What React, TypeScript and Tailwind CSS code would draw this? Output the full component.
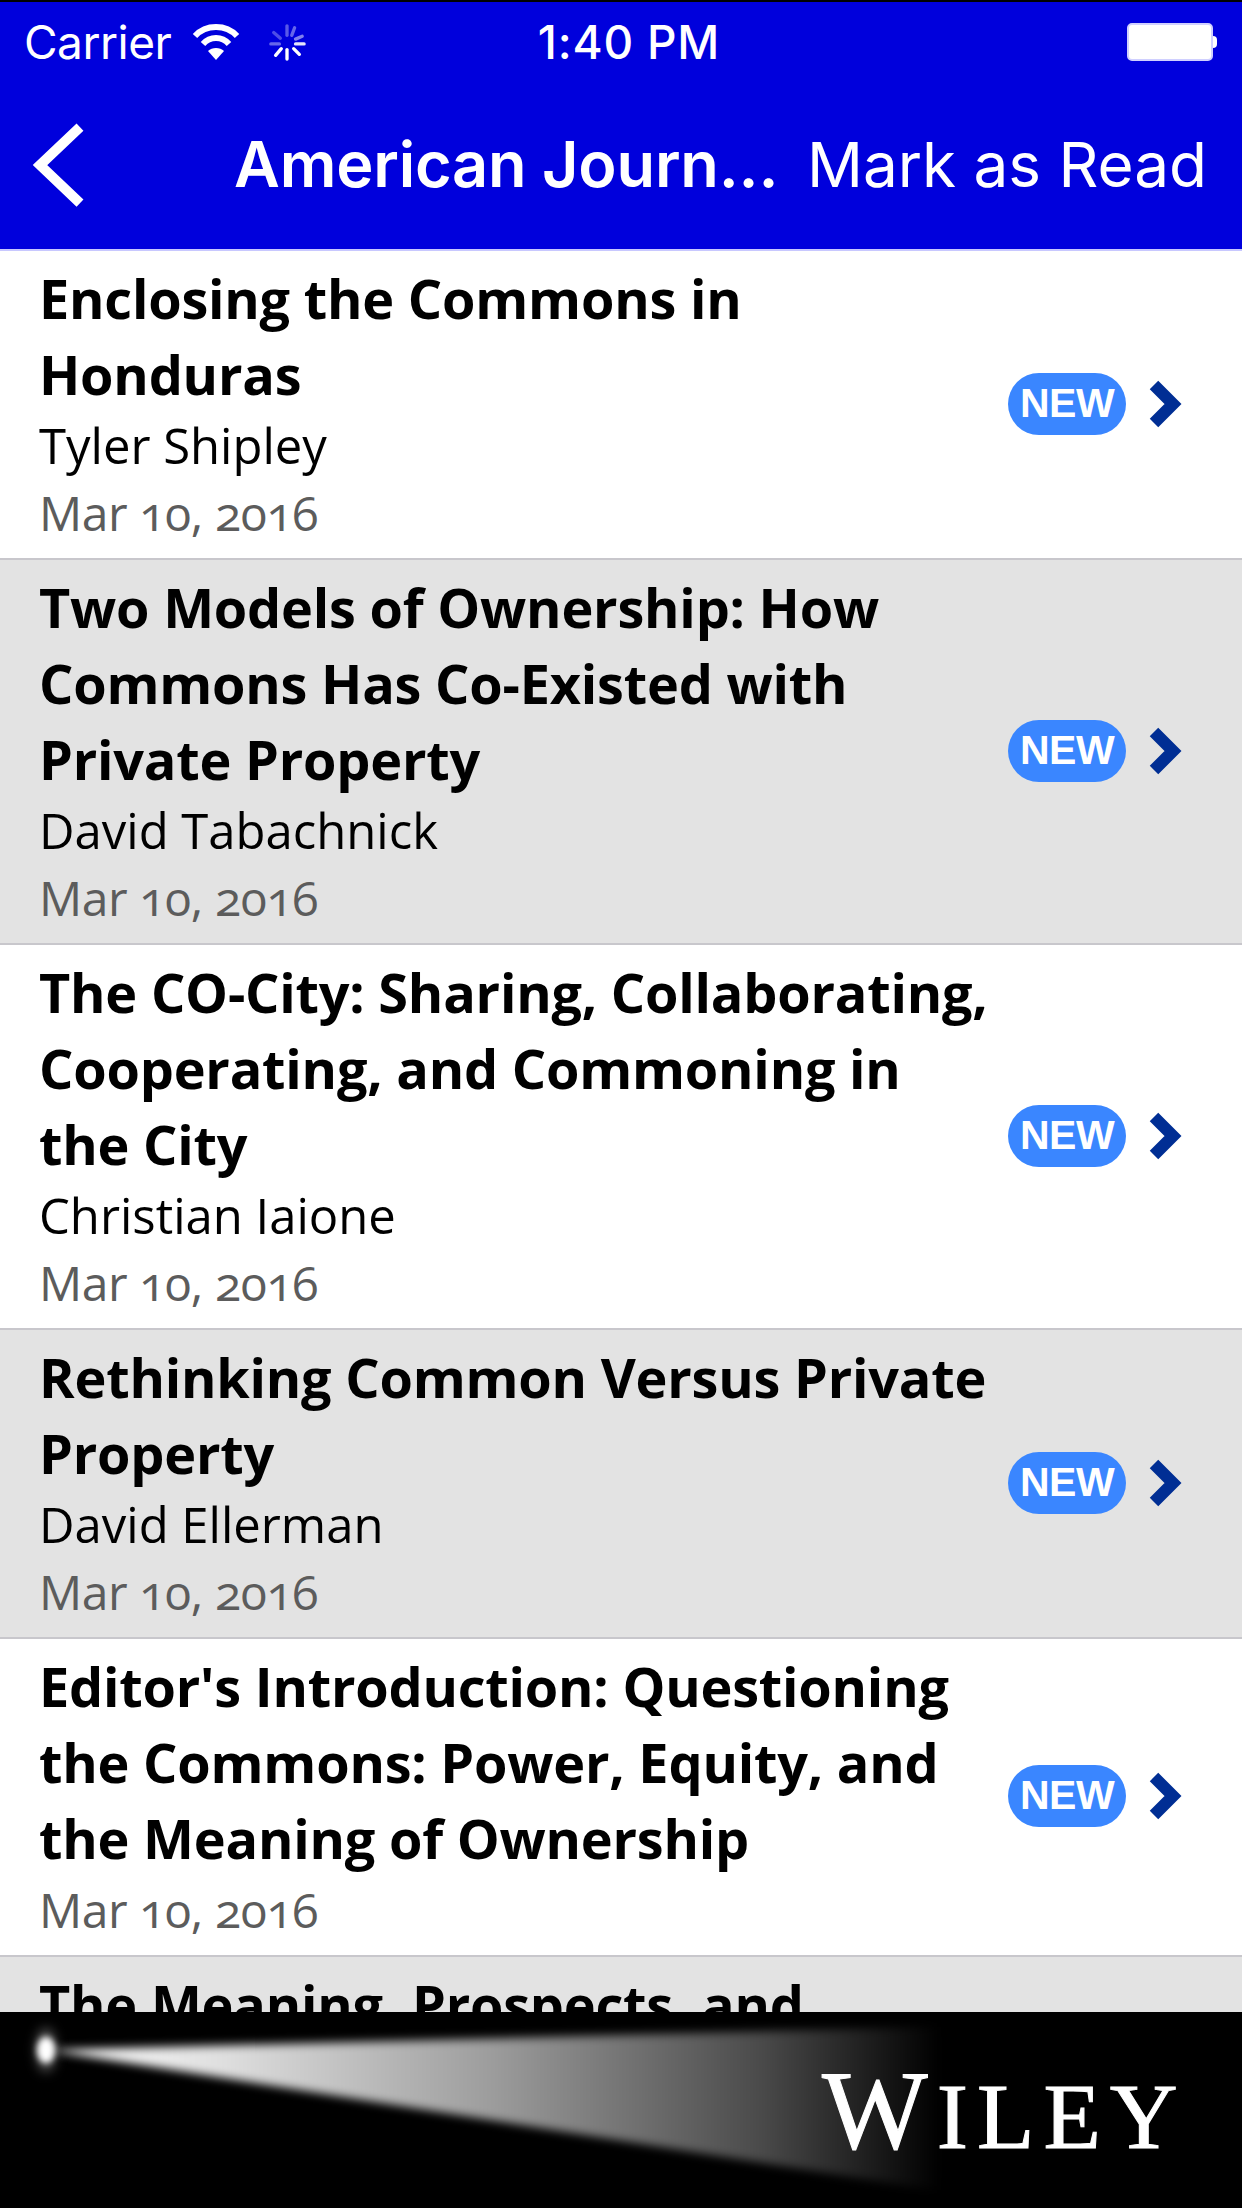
const rows = [
  { title: ["Enclosing the Commons in", "Honduras"], author: "Tyler Shipley", gray: false },
  { title: ["Two Models of Ownership: How", "Commons Has Co-Existed with", "Private Property"], author: "David Tabachnick", gray: true },
  { title: ["The CO-City: Sharing, Collaborating,", "Cooperating, and Commoning in", "the City"], author: "Christian Iaione", gray: false },
  { title: ["Rethinking Common Versus Private", "Property"], author: "David Ellerman", gray: true },
  { title: ["Editor's Introduction: Questioning", "the Commons: Power, Equity, and", "the Meaning of Ownership"], author: "", gray: false },
];

function Row({ title, author, gray }: { title: string[]; author: string; gray: boolean }) {
  return (
    <div className={`flex items-center border-b-2 border-[#c8c7cc] pl-[39px] pr-[59px] pt-[9px] pb-[11px] ${gray ? "bg-[#e3e3e3]" : "bg-white"}`}>
      <div className="flex-1 min-w-0">
        {title.map((t) => (
          <div key={t} className="text-[54px] leading-[76px] font-bold tracking-[-0.2px] text-black whitespace-nowrap">{t}</div>
        ))}
        {author && <div className="text-[49px] leading-[67px] text-black">{author}</div>}
        <div className="text-[48px] leading-[68px] tracking-[-0.4px] oldstyle-nums text-[#5c5c5c]">Mar 10, 2016</div>
      </div>
      <div className="flex items-center gap-[21px] shrink-0">
        <div className="w-[118px] h-[62px] rounded-full bg-[#3a86ff] flex items-center justify-center text-white font-bold text-[41px] tracking-[-0.5px] font-['Liberation_Sans',sans-serif]">NEW</div>
        <svg width="36" height="52" viewBox="0 0 36 52">
          <path d="M7 7 L26 26 L7 45" fill="none" stroke="#002e94" strokeWidth="12" />
        </svg>
      </div>
    </div>
  );
}

export default function App() {
  return (
    <div className="w-[1242px] h-[2208px] relative overflow-hidden bg-white flex flex-col font-['Open_Sans',sans-serif]">
      <header className="h-[251px] shrink-0 bg-[#0000dc] border-t-2 border-black border-b-2 border-b-[#c8c8ff] text-white font-['Inter',sans-serif] flex flex-col">
        <div className="h-[82px] relative flex items-center pl-[24px] pr-[25px] pb-[2px] text-[46px]">
          <span className="tracking-[-0.5px]">Carrier</span>
          <svg className="ml-[20px]" width="50" height="38" viewBox="0 0 50 38" fill="none" stroke="white" strokeWidth="6">
            <path d="M4 13 C15 1 35 1 46 13" />
            <path d="M12 21 C19 13 31 13 38 21" />
            <path d="M25 37 L17 28 C21 24 29 24 33 28 Z" fill="white" stroke="none" />
          </svg>
          <svg className="ml-[27px]" width="38" height="38" viewBox="0 0 40 40" stroke="white" strokeWidth="3.5" strokeLinecap="round">
            <path d="M20 3 V13" opacity=".35" />
            <path d="M28 5 L25 13" opacity=".4" />
            <path d="M36 14 L29 17" opacity=".5" />
            <path d="M38 22 H29" opacity=".9" />
            <path d="M33 33 L27 27" />
            <path d="M20 38 V28" />
            <path d="M8 34 L14 27" />
            <path d="M3 22 H12" opacity=".4" />
            <path d="M6 10 L13 16" opacity=".3" />
          </svg>
          <span className="absolute left-[16px] right-0 text-center font-medium tracking-[0.8px]">1:40 PM</span>
          <div className="ml-auto flex items-center">
            <div className="w-[86px] h-[38px] bg-white rounded-[5px] border-2 border-[#d0d0ff]" />
            <div className="w-[4px] h-[12px] bg-white rounded-r-full" />
          </div>
        </div>
        <div className="flex-1 flex items-center pl-[30px] pr-[35px] pb-[4px]">
          <svg width="56" height="84" viewBox="0 0 56 84" fill="none" stroke="white" strokeWidth="10">
            <path d="M50 4 L10 42 L50 80" />
          </svg>
          <span className="ml-[148px] text-[63px] tracking-[-0.2px] font-semibold leading-none">American Journ...</span>
          <span className="ml-auto text-[62px] leading-none">Mark as Read</span>
        </div>
      </header>
      <main className="flex-1 min-h-0 overflow-hidden">
        {rows.map((r) => (
          <Row key={r.title[0]} {...r} />
        ))}
        <div className="bg-[#e3e3e3] pl-[39px] pt-[9px] text-[54px] leading-[76px] font-bold tracking-[-0.2px] text-black whitespace-nowrap">The Meaning, Prospects, and</div>
      </main>
      <footer className="h-[196px] shrink-0 bg-black relative overflow-hidden">
        <svg className="absolute inset-0" width="1242" height="196" viewBox="0 0 1242 196">
          <defs>
            <linearGradient id="beam" x1="46" y1="0" x2="940" y2="0" gradientUnits="userSpaceOnUse">
              <stop offset="0" stopColor="#fff" />
              <stop offset=".2" stopColor="#dedede" />
              <stop offset=".5" stopColor="#9c9c9c" />
              <stop offset=".8" stopColor="#4a4a4a" />
              <stop offset="1" stopColor="#000" />
            </linearGradient>
            <filter id="soft" x="-5%" y="-20%" width="110%" height="140%" colorInterpolationFilters="sRGB"><feGaussianBlur stdDeviation="5" /></filter>
            <filter id="glow" x="-100%" y="-100%" width="300%" height="300%" colorInterpolationFilters="sRGB"><feGaussianBlur stdDeviation="3" /></filter>
            <filter id="halo" x="-200%" y="-200%" width="500%" height="500%" colorInterpolationFilters="sRGB"><feGaussianBlur stdDeviation="6" /></filter>
          </defs>
          <polygon points="46,38 960,14 960,182" fill="url(#beam)" filter="url(#soft)" />
          <ellipse cx="46" cy="38" rx="10" ry="22" fill="#555" filter="url(#halo)" />
          <ellipse cx="46" cy="38" rx="9" ry="13" fill="#fff" filter="url(#glow)" />
        </svg>
        <div className="absolute left-[822px] top-[42px] text-white font-['Liberation_Serif',serif] leading-none whitespace-nowrap tracking-[9px] [-webkit-text-stroke:1px_white]">
          <span className="text-[112px]">W</span><span className="text-[94px]">ILEY</span>
        </div>
      </footer>
    </div>
  );
}
